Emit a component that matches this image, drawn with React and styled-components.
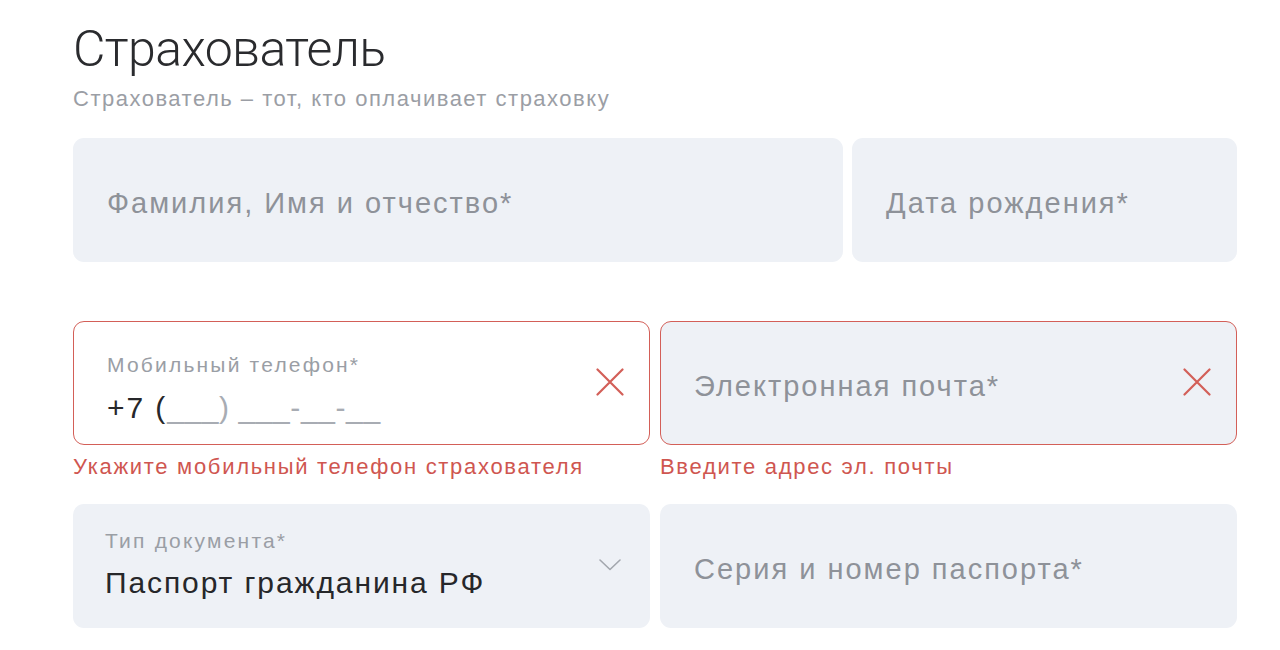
import { createGlobalStyle, styled } from "styled-components"

const Global = createGlobalStyle`
body{
  margin:0;
  background:#fff;
  font-family:"Liberation Sans", Arial, sans-serif;
}
`

const CrossIcon = () => (
  <svg width="28" height="28" viewBox="0 0 28 28" fill="none">
    <path d="M1.5 1.5 L26.5 26.5 M26.5 1.5 L1.5 26.5" stroke="#d35f58" strokeWidth="2.2" strokeLinecap="round" />
  </svg>
)

const ChevronIcon = () => (
  <svg width="22" height="12" viewBox="0 0 22 12" fill="none">
    <path d="M1 1 L11 10.5 L21 1" stroke="#a3a7ae" strokeWidth="1.6" strokeLinecap="round" strokeLinejoin="round" />
  </svg>
)

const Field = ({ label, value, placeholder, error, message, white, icon, indent, dense }) => (
  <FieldWrap>
    <Box $error={error} $white={white} $indent={indent}>
      <Content>
        {label && <Label $dense={dense}>{label}</Label>}
        {value && <Value $dense={dense}>{value}</Value>}
        {placeholder && <Placeholder>{placeholder}</Placeholder>}
      </Content>
      {icon && <IconSlot>{icon}</IconSlot>}
    </Box>
    {message && <Message>{message}</Message>}
  </FieldWrap>
)

const App = () => {
  return (
    <Page>
      <Global />
      <Title>Страхователь</Title>
      <Subtitle>Страхователь – тот, кто оплачивает страховку</Subtitle>

      <Row $cols="2fr 1fr" $gap="9px">
        <Field placeholder="Фамилия, Имя и отчество*" />
        <Field placeholder="Дата рождения*" />
      </Row>

      <Row $cols="1fr 1fr" $gap="10px" $top="59px">
        <Field
          white
          error
          label="Мобильный телефон*"
          value={<>+7 (<Mask>___) ___-__-__</Mask></>}
          icon={<CrossIcon />}
          message="Укажите мобильный телефон страхователя"
        />
        <Field
          error
          placeholder="Электронная почта*"
          icon={<CrossIcon />}
          message="Введите адрес эл. почты"
        />
      </Row>

      <Row $cols="1fr 1fr" $gap="10px" $top="24px">
        <Field dense indent="31px" label="Тип документа*" value="Паспорт гражданина РФ" icon={<ChevronIcon />} />
        <Field placeholder="Серия и номер паспорта*" />
      </Row>
    </Page>
  )
}

export default App

const Page = styled.div`
width:1164px;
padding:17px 0 0 73px;
`

const Title = styled.h1`
margin:0;
font-family:Roboto, "Liberation Sans", sans-serif;
font-weight:300;
font-size:50px;
line-height:64px;
color:#2a2b2e;
letter-spacing:-0.6px;
`

const Subtitle = styled.div`
margin-top:5px;
font-size:22px;
line-height:26px;
letter-spacing:1.5px;
color:#9b9ea5;
margin-bottom:26px;
`

const Row = styled.div`
display:grid;
grid-template-columns:${p => p.$cols};
column-gap:${p => p.$gap};
margin-top:${p => p.$top || "0"};
align-items:start;
`

const FieldWrap = styled.div`
display:flex;
flex-direction:column;
`

const Box = styled.div`
box-sizing:border-box;
height:124px;
border-radius:11px;
background:${p => (p.$white ? "#fff" : "#eef1f6")};
border:${p => (p.$error ? "1.6px solid #d35f58" : "1.6px solid transparent")};
display:flex;
align-items:center;
padding:0 24px 0 ${p => p.$indent || "33px"};
`

const Content = styled.div`
flex:1;
display:flex;
flex-direction:column;
padding-top:6px;
`

const Label = styled.div`
font-size:21px;
line-height:24px;
letter-spacing:2.2px;
color:#9a9ea5;
margin-top:${p => (p.$dense ? "-8px" : "2px")};
`

const Value = styled.div`
font-size:30px;
line-height:36px;
letter-spacing:1.9px;
color:#26272a;
margin-top:${p => (p.$dense ? "12px" : "8px")};
position:relative;
top:${p => (p.$dense ? "0" : "5px")};
`

const Mask = styled.span`
color:#a8acb3;
letter-spacing:0.6px;
`

const Placeholder = styled.div`
font-size:29px;
line-height:36px;
letter-spacing:2px;
color:#8e9299;
`

const IconSlot = styled.div`
display:flex;
align-items:center;
justify-content:center;
width:30px;
margin-top:-2px;
`

const Message = styled.div`
font-size:22px;
line-height:26px;
letter-spacing:1.7px;
color:#cf5650;
margin-top:9px;
`
